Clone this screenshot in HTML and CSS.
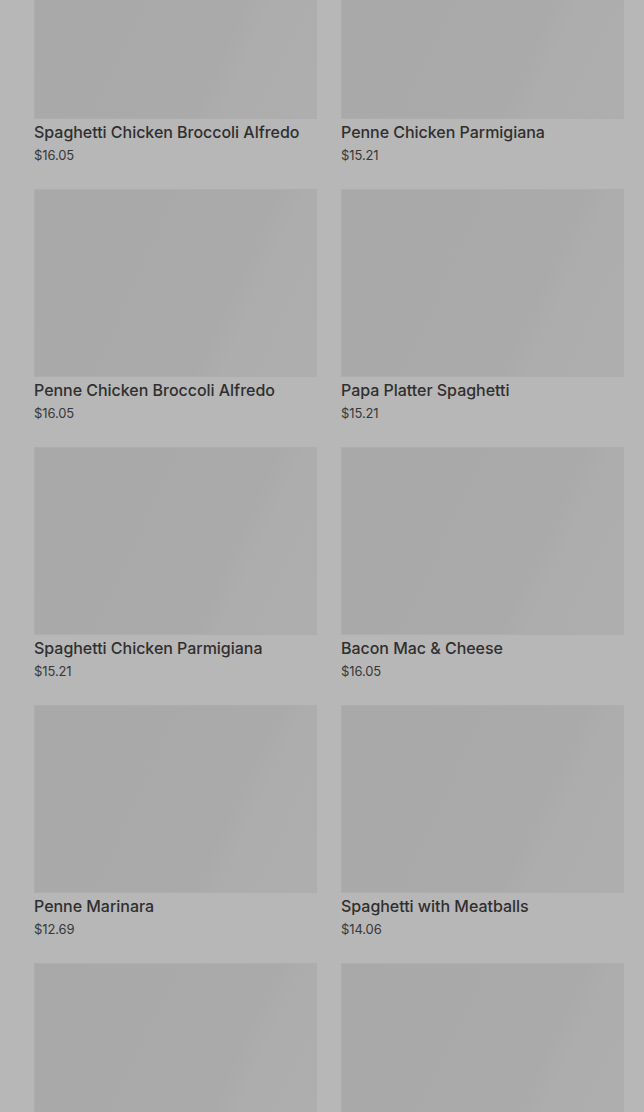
FILE: index.html
```html
<!DOCTYPE html>
<html lang="en">
<head>
<meta charset="utf-8">
<title>Menu</title>
<link rel="stylesheet" href="styles.css">
</head>
<body>
<main class="menu">
  <div class="grid">
    <a class="card"><div class="thumb"></div><div class="title">Spaghetti Chicken Broccoli Alfredo</div><div class="price">$16.05</div></a>
    <a class="card"><div class="thumb"></div><div class="title">Penne Chicken Parmigiana</div><div class="price">$15.21</div></a>
    <a class="card"><div class="thumb"></div><div class="title">Penne Chicken Broccoli Alfredo</div><div class="price">$16.05</div></a>
    <a class="card"><div class="thumb"></div><div class="title">Papa Platter Spaghetti</div><div class="price">$15.21</div></a>
    <a class="card"><div class="thumb"></div><div class="title">Spaghetti Chicken Parmigiana</div><div class="price">$15.21</div></a>
    <a class="card"><div class="thumb"></div><div class="title">Bacon Mac &amp; Cheese</div><div class="price">$16.05</div></a>
    <a class="card"><div class="thumb"></div><div class="title">Penne Marinara</div><div class="price">$12.69</div></a>
    <a class="card"><div class="thumb"></div><div class="title">Spaghetti with Meatballs</div><div class="price">$14.06</div></a>
    <a class="card"><div class="thumb"></div></a>
    <a class="card"><div class="thumb"></div></a>
  </div>
</main>
</body>
</html>
```
FILE: styles.css
```css
html, body {
  margin: 0;
  padding: 0;
  background: #b7b7b7;
}
body {
  font-family: Inter, "Liberation Sans", sans-serif;
  color: #333;
  overflow: hidden;
}
.menu {
  padding: 0 20px 0 34px;
}
.grid {
  margin-top: -69px;
  display: grid;
  grid-template-columns: 283px 283px;
  column-gap: 24px;
  row-gap: 28px;
  align-items: start;
}
.card {
  display: flex;
  flex-direction: column;
  text-decoration: none;
  color: inherit;
  height: 230px;
}
.thumb {
  flex: none;
  height: 188px;
  background: linear-gradient(115deg, #a9a9a9 0%, #aaaaaa 66%, #adadad 74%, #aeaeae 100%);
  box-shadow: inset 0 0 0 1px #adadad;
  margin-bottom: 3px;
}
.title {
  font-size: 16px;
  line-height: 20px;
  font-weight: 450;
  color: #2f2f2f;
  letter-spacing: -0.03px;
}
.price {
  margin-top: 4px;
  font-size: 13px;
  line-height: 18px;
  color: #383838;
  letter-spacing: -0.1px;
}
```
